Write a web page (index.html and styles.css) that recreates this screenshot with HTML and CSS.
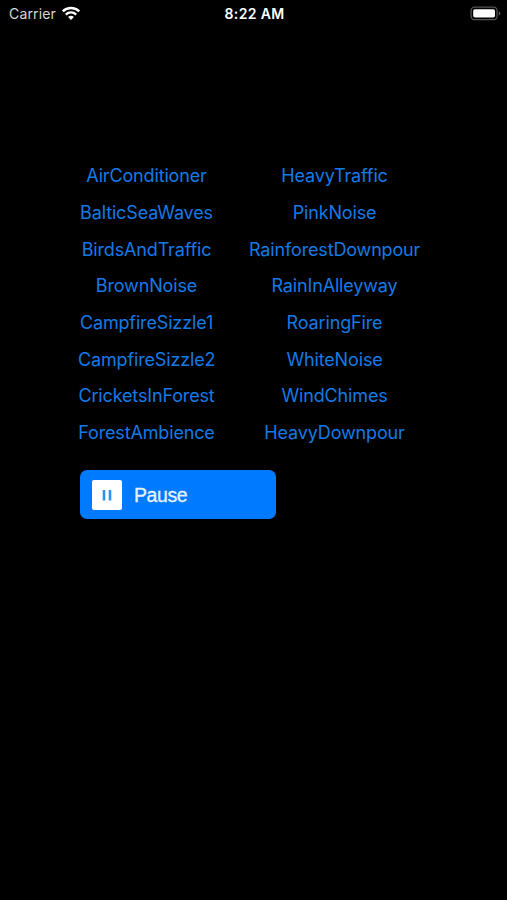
FILE: index.html
```
<!DOCTYPE html>
<html lang="en">
<head>
    <meta charset="UTF-8">
    <meta name="viewport" content="width=device-width, initial-scale=1">
    <title>Sounds</title>
    <link rel="stylesheet" href="styles.css">
</head>
<body>
    <header class="status-bar">
        <div class="carrier">
            <span>Carrier</span>
            <svg class="wifi" viewBox="0 0 20 15" width="20" height="15">
                <path d="M1.8 5.4a11.7 11.7 0 0 1 16.4 0" fill="none" stroke="#fff" stroke-width="2.5"/>
                <path d="M4.8 8.6a7.4 7.4 0 0 1 10.4 0" fill="none" stroke="#fff" stroke-width="2.3"/>
                <path d="M10 14L7.1 11.1a4.1 4.1 0 0 1 5.8 0z" fill="#fff"/>
            </svg>
        </div>
        <div class="time">8:22 AM</div>
        <div class="power">
            <svg class="battery" viewBox="0 0 31 15" width="31" height="15">
                <rect x="1.1" y="1.1" width="26" height="12.6" rx="3.5" fill="none" stroke="#555" stroke-width="1.3"/>
                <rect x="3.2" y="3.2" width="21.8" height="8.4" rx="1.8" fill="#fff"/>
                <path d="M28.8 5.2a2.4 2.4 0 0 1 0 4.4z" fill="#666"/>
            </svg>
        </div>
    </header>
    <main class="player">
        <div class="sounds">
            <div class="column">
                <button>AirConditioner</button>
                <button>BalticSeaWaves</button>
                <button>BirdsAndTraffic</button>
                <button>BrownNoise</button>
                <button>CampfireSizzle1</button>
                <button>CampfireSizzle2</button>
                <button>CricketsInForest</button>
                <button>ForestAmbience</button>
            </div>
            <div class="column column-wide">
                <button>HeavyTraffic</button>
                <button>PinkNoise</button>
                <button>RainforestDownpour</button>
                <button>RainInAlleyway</button>
                <button>RoaringFire</button>
                <button>WhiteNoise</button>
                <button>WindChimes</button>
                <button>HeavyDownpour</button>
            </div>
        </div>
        <button class="pause">
            <svg viewBox="0 0 30 30" width="30" height="30">
                <rect width="30" height="30" rx="2" fill="#fff"/>
                <rect x="10.7" y="10" width="2.6" height="10.5" rx=".6" fill="#2f8fee"/>
                <rect x="16.7" y="10" width="2.6" height="10.5" rx=".6" fill="#2f8fee"/>
            </svg>
            <span>Pause</span>
        </button>
    </main>
</body>
</html>
```
FILE: styles.css
```
body {
    margin: 0;
    min-height: 100vh;
    background-color: #000;
    color: #fff;
    font-family: Inter, "Liberation Sans", sans-serif;
}
button {
    padding: 0;
    border: none;
    background: none;
    font-family: inherit;
    cursor: pointer;
}
.status-bar {
    display: grid;
    grid-template-columns: 1fr auto 1fr;
    align-items: center;
    height: 27px;
    padding: 0 6px 0 9px;
    font-size: 14px;
}
.carrier {
    display: flex;
    align-items: center;
    gap: 5px;
    color: #d8d8d8;
    letter-spacing: 0.15px;
}
.time {
    margin-left: -1px;
    font-weight: 600;
    letter-spacing: 0.35px;
}
.power {
    display: flex;
    justify-content: flex-end;
}
.player {
    padding: 130.4px 0 0 78px;
}
.sounds {
    display: flex;
    gap: 34px;
}
.column {
    display: flex;
    flex-direction: column;
    width: 137px;
}
.column-wide {
    width: 171px;
}
.column button {
    height: 36.7px;
    color: #147ae6;
    font-size: 18px;
    letter-spacing: -0.15px;
    white-space: nowrap;
}
.pause {
    display: flex;
    align-items: center;
    gap: 12px;
    width: 196px;
    height: 49px;
    margin: 19px 0 0 2px;
    padding: 1px 12px 0;
    border-radius: 7px;
    background-color: #007aff;
    color: #e8f2ff;
    font-family: "Liberation Sans", sans-serif;
    font-size: 19.5px;
    letter-spacing: -0.4px;
}
.pause span {
    padding-top: 1px;
    -webkit-text-stroke: 0.3px #e8f2ff;
}
```
